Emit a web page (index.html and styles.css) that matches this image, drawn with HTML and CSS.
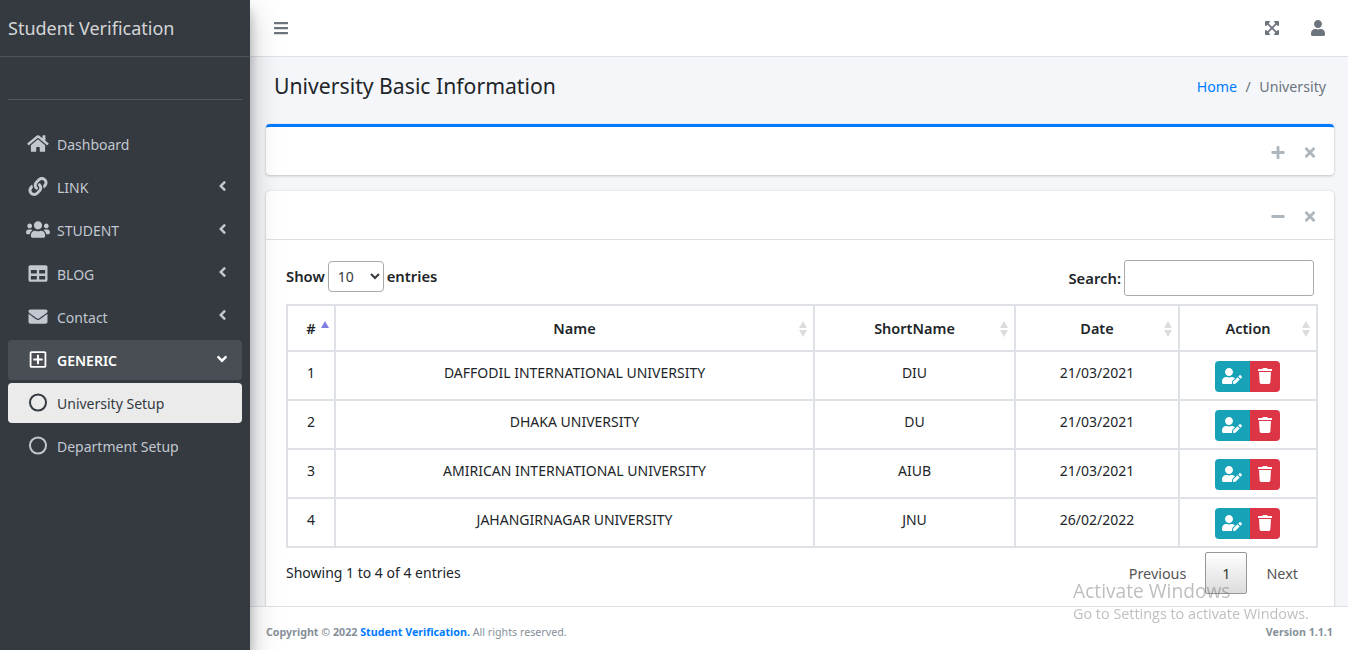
FILE: index.html
```html
<!DOCTYPE html>
<html lang="en">
<head>
    <meta charset="UTF-8">
    <meta name="viewport" content="width=device-width, initial-scale=1.0">
    <title>University Basic Information</title>
    <link rel="stylesheet" href="styles.css">
</head>
<body>

<!-- icon sprite -->
<svg class="sprite" xmlns="http://www.w3.org/2000/svg">
    <symbol id="i-bars" viewBox="0 0 448 512"><path d="M16 132h416c8.837 0 16-7.163 16-16V76c0-8.837-7.163-16-16-16H16C7.163 60 0 67.163 0 76v40c0 8.837 7.163 16 16 16zm0 160h416c8.837 0 16-7.163 16-16v-40c0-8.837-7.163-16-16-16H16c-8.837 0-16 7.163-16 16v40c0 8.837 7.163 16 16 16zm0 160h416c8.837 0 16-7.163 16-16v-40c0-8.837-7.163-16-16-16H16c-8.837 0-16 7.163-16 16v40c0 8.837 7.163 16 16 16z"/></symbol>
    <symbol id="i-user" viewBox="0 0 448 512"><path d="M224 256c70.7 0 128-57.3 128-128S294.7 0 224 0 96 57.3 96 128s57.3 128 128 128zm89.6 32h-16.7c-22.2 10.2-46.9 16-72.9 16s-50.6-5.8-72.9-16h-16.7C60.2 288 0 348.2 0 422.4V464c0 26.5 21.5 48 48 48h352c26.5 0 48-21.5 48-48v-41.6c0-74.2-60.2-134.4-134.4-134.4z"/></symbol>
    <symbol id="i-expand" viewBox="0 0 448 512"><path d="M448 344v112a23.94 23.94 0 0 1-24 24H312c-21.39 0-32.09-25.9-17-41l36.2-36.2L224 295.6 116.77 402.9 153 439c15.09 15.1 4.39 41-17 41H24a23.94 23.94 0 0 1-24-24V344c0-21.4 25.89-32.1 41-17l36.19 36.2L184.46 256 77.18 148.7 41 185c-15.1 15.1-41 4.4-41-17V56a23.94 23.94 0 0 1 24-24h112c21.39 0 32.09 25.9 17 41l-36.2 36.2L224 216.4l107.23-107.3L295 73c-15.09-15.1-4.39-41 17-41h112a23.94 23.94 0 0 1 24 24v112c0 21.4-25.89 32.1-41 17l-36.19-36.2L263.54 256l107.28 107.3L407 327.1c15.1-15.2 41-4.5 41 16.9z"/></symbol>
    <symbol id="i-home" viewBox="0 0 576 512"><path d="M280.37 148.26L96 300.11V464a16 16 0 0 0 16 16l112.06-.29a16 16 0 0 0 15.92-16V368a16 16 0 0 1 16-16h64a16 16 0 0 1 16 16v95.64a16 16 0 0 0 16 16.05L464 480a16 16 0 0 0 16-16V300L295.67 148.26a12.19 12.19 0 0 0-15.3 0zM571.6 251.47L488 182.56V44.05a12 12 0 0 0-12-12h-56a12 12 0 0 0-12 12v72.61L318.47 43a48 48 0 0 0-61 0L4.34 251.47a12 12 0 0 0-1.6 16.9l25.5 31A12 12 0 0 0 45.15 301l235.22-193.74a12.19 12.19 0 0 1 15.3 0L530.9 301a12 12 0 0 0 16.9-1.6l25.5-31a12 12 0 0 0-1.7-16.93z"/></symbol>
    <symbol id="i-link" viewBox="0 0 512 512"><path d="M326.612 185.391c59.747 59.809 58.927 155.698.36 214.59-.11.12-.24.25-.36.37l-67.2 67.2c-59.27 59.27-155.699 59.262-214.96 0-59.27-59.26-59.27-155.7 0-214.96l37.106-37.106c9.84-9.84 26.786-3.3 27.294 10.606.648 17.722 3.826 35.527 9.69 52.721 1.986 5.822.567 12.262-3.783 16.612l-13.087 13.087c-28.026 28.026-28.905 73.66-1.155 101.96 28.024 28.579 74.086 28.749 102.325.51l67.2-67.19c28.191-28.191 28.073-73.757 0-101.83-3.701-3.694-7.429-6.564-10.341-8.569a16.037 16.037 0 0 1-6.947-12.606c-.396-10.567 3.348-21.456 11.698-29.806l21.054-21.055c5.521-5.521 14.182-6.199 20.584-1.731a152.482 152.482 0 0 1 20.522 17.197zM467.547 44.449c-59.261-59.262-155.69-59.27-214.96 0l-67.2 67.2c-.12.12-.25.25-.36.37-58.566 58.892-59.387 154.781.36 214.59a152.454 152.454 0 0 0 20.521 17.196c6.402 4.468 15.064 3.789 20.584-1.731l21.054-21.055c8.35-8.35 12.094-19.239 11.698-29.806a16.037 16.037 0 0 0-6.947-12.606c-2.912-2.005-6.64-4.875-10.341-8.569-28.073-28.073-28.191-73.639 0-101.83l67.2-67.19c28.239-28.239 74.3-28.069 102.325.51 27.75 28.3 26.872 73.934-1.155 101.96l-13.087 13.087c-4.35 4.35-5.769 10.79-3.783 16.612 5.864 17.194 9.042 34.999 9.69 52.721.509 13.906 17.454 20.446 27.294 10.606l37.106-37.106c59.271-59.259 59.271-155.699.001-214.959z"/></symbol>
    <symbol id="i-users" viewBox="0 0 640 512"><path d="M96 224c35.3 0 64-28.7 64-64s-28.7-64-64-64-64 28.7-64 64 28.7 64 64 64zm448 0c35.3 0 64-28.7 64-64s-28.7-64-64-64-64 28.7-64 64 28.7 64 64 64zm32 32h-64c-17.6 0-33.5 7.1-45.1 18.6 40.3 22.1 68.9 62 75.1 109.4h66c17.7 0 32-14.3 32-32v-32c0-35.3-28.7-64-64-64zm-256 0c61.9 0 112-50.1 112-112S381.9 32 320 32 208 82.1 208 144s50.1 112 112 112zm76.8 32h-8.3c-20.8 10-43.9 16-68.5 16s-47.6-6-68.5-16h-8.3C179.6 288 128 339.6 128 403.2V432c0 26.5 21.5 48 48 48h288c26.5 0 48-21.5 48-48v-28.8c0-63.6-51.6-115.2-115.2-115.2zm-223.7-13.4C161.5 263.1 145.6 256 128 256H64c-35.3 0-64 28.7-64 64v32c0 17.7 14.3 32 32 32h65.9c6.3-47.4 34.9-87.3 75.2-109.4z"/></symbol>
    <symbol id="i-table" viewBox="0 0 512 512"><path d="M464 32H48C21.49 32 0 53.49 0 80v352c0 26.51 21.49 48 48 48h416c26.51 0 48-21.49 48-48V80c0-26.51-21.49-48-48-48zM224 416H64v-96h160v96zm0-160H64v-96h160v96zm224 160H288v-96h160v96zm0-160H288v-96h160v96z"/></symbol>
    <symbol id="i-envelope" viewBox="0 0 512 512"><path d="M502.3 190.8c3.9-3.1 9.7-.2 9.7 4.7V400c0 26.5-21.5 48-48 48H48c-26.5 0-48-21.5-48-48V195.6c0-5 5.7-7.8 9.7-4.7 22.4 17.4 52.1 39.5 154.1 113.6 21.1 15.4 56.7 47.8 92.2 47.6 35.7.3 72-32.8 92.3-47.6 102-74.1 131.6-96.3 154-113.7zM256 320c23.2.4 56.6-29.2 73.4-41.4 132.7-96.3 142.8-104.7 173.4-128.7 5.8-4.5 9.2-11.5 9.2-18.9v-19c0-26.5-21.5-48-48-48H48C21.5 64 0 85.5 0 112v19c0 7.4 3.4 14.3 9.2 18.9 30.6 23.9 40.7 32.4 173.4 128.7 16.8 12.2 50.2 41.8 73.4 41.4z"/></symbol>
    <symbol id="i-plus-square" viewBox="0 0 448 512"><path d="M352 240v32c0 6.6-5.4 12-12 12h-88v88c0 6.6-5.4 12-12 12h-32c-6.6 0-12-5.4-12-12v-88h-88c-6.6 0-12-5.4-12-12v-32c0-6.6 5.4-12 12-12h88v-88c0-6.6 5.4-12 12-12h32c6.6 0 12 5.4 12 12v88h88c6.6 0 12 5.4 12 12zm96-160v352c0 26.5-21.5 48-48 48H48c-26.5 0-48-21.5-48-48V80c0-26.5 21.5-48 48-48h352c26.5 0 48 21.5 48 48zm-48 346V86c0-3.3-2.7-6-6-6H54c-3.3 0-6 2.7-6 6v340c0 3.3 2.7 6 6 6h340c3.3 0 6-2.7 6-6z"/></symbol>
    <symbol id="i-angle-left" viewBox="0 0 256 512"><path d="M31.7 239l136-136c9.4-9.4 24.6-9.4 33.9 0l22.6 22.6c9.4 9.4 9.4 24.6 0 33.9L127.9 256l96.4 96.4c9.4 9.4 9.4 24.6 0 33.9L201.7 409c-9.4 9.4-24.6 9.4-33.9 0l-136-136c-9.5-9.4-9.5-24.6-.1-34z"/></symbol>
    <symbol id="i-angle-down" viewBox="0 0 320 512"><path d="M143 352.3L7 216.3c-9.4-9.4-9.4-24.6 0-33.9l22.6-22.6c9.4-9.4 24.6-9.4 33.9 0l96.4 96.4 96.4-96.4c9.4-9.4 24.6-9.4 33.9 0l22.6 22.6c9.4 9.4 9.4 24.6 0 33.9l-136 136c-9.2 9.4-24.4 9.4-33.8 0z"/></symbol>
    <symbol id="i-plus" viewBox="0 0 448 512"><path d="M416 208H272V64c0-17.67-14.33-32-32-32h-32c-17.67 0-32 14.33-32 32v144H32c-17.67 0-32 14.33-32 32v32c0 17.67 14.33 32 32 32h144v144c0 17.67 14.33 32 32 32h32c17.67 0 32-14.33 32-32V304h144c17.67 0 32-14.33 32-32v-32c0-17.67-14.33-32-32-32z"/></symbol>
    <symbol id="i-minus" viewBox="0 0 448 512"><path d="M416 208H32c-17.67 0-32 14.33-32 32v32c0 17.67 14.33 32 32 32h384c17.67 0 32-14.33 32-32v-32c0-17.67-14.33-32-32-32z"/></symbol>
    <symbol id="i-times" viewBox="0 0 352 512"><path d="M242.72 256l100.07-100.07c12.28-12.28 12.28-32.19 0-44.48l-22.24-22.24c-12.28-12.28-32.19-12.28-44.48 0L176 189.28 75.93 89.21c-12.28-12.28-32.19-12.28-44.48 0L9.21 111.45c-12.28 12.28-12.28 32.19 0 44.48L109.28 256 9.21 356.07c-12.28 12.28-12.28 32.19 0 44.48l22.24 22.24c12.28 12.28 32.2 12.28 44.48 0L176 322.72l100.07 100.07c12.28 12.28 32.2 12.28 44.48 0l22.24-22.24c12.28-12.28 12.28-32.19 0-44.48L242.72 256z"/></symbol>
    <symbol id="i-trash" viewBox="0 0 448 512"><path d="M432 32H312l-9.4-18.7A24 24 0 0 0 281.1 0H166.8a23.72 23.72 0 0 0-21.4 13.3L136 32H16A16 16 0 0 0 0 48v32a16 16 0 0 0 16 16h416a16 16 0 0 0 16-16V48a16 16 0 0 0-16-16zM53.2 467a48 48 0 0 0 47.9 45h245.8a48 48 0 0 0 47.9-45L416 128H32z"/></symbol>
    <symbol id="i-user-edit" viewBox="0 0 640 512"><path d="M224 256c70.7 0 128-57.3 128-128S294.7 0 224 0 96 57.3 96 128s57.3 128 128 128zm89.6 32h-16.7c-22.2 10.2-46.9 16-72.9 16s-50.6-5.8-72.9-16h-16.7C60.2 288 0 348.2 0 422.4V464c0 26.5 21.5 48 48 48h274.9c-2.4-6.8-3.4-14-2.6-21.3l6.8-60.9 1.2-11.1 7.9-7.9 77.3-77.3c-24.5-27.7-60-45.5-99.9-45.5zm45.3 145.3l-6.8 61c-1.1 10.2 7.5 18.8 17.6 17.6l60.9-6.8 137.9-137.9-71.7-71.7-137.9 137.8zM633 268.9L595.1 231c-9.3-9.3-24.5-9.3-33.8 0l-37.8 37.8-4.1 4.1 71.8 71.7 41.8-41.8c9.3-9.4 9.3-24.5 0-33.9z"/></symbol>
    <symbol id="i-circle" viewBox="0 0 18 18"><circle cx="9" cy="9" r="7.6" fill="none" stroke="currentColor" stroke-width="1.9"/></symbol>
</svg>

<div class="wrapper">
    <aside class="sidebar">
        <div class="brand">Student Verification</div>
        <div class="user-panel"></div>
        <nav class="side-nav">
            <a class="nav-item"><svg class="nav-icon"><use href="#i-home"/></svg><span class="nav-text">Dashboard</span></a>
            <a class="nav-item"><svg class="nav-icon"><use href="#i-link"/></svg><span class="nav-text">LINK</span><svg class="nav-arrow"><use href="#i-angle-left"/></svg></a>
            <a class="nav-item"><svg class="nav-icon"><use href="#i-users"/></svg><span class="nav-text">STUDENT</span><svg class="nav-arrow"><use href="#i-angle-left"/></svg></a>
            <a class="nav-item"><svg class="nav-icon"><use href="#i-table"/></svg><span class="nav-text">BLOG</span><svg class="nav-arrow"><use href="#i-angle-left"/></svg></a>
            <a class="nav-item"><svg class="nav-icon"><use href="#i-envelope"/></svg><span class="nav-text">Contact</span><svg class="nav-arrow"><use href="#i-angle-left"/></svg></a>
            <a class="nav-item open"><svg class="nav-icon"><use href="#i-plus-square"/></svg><span class="nav-text">GENERIC</span><svg class="nav-arrow"><use href="#i-angle-down"/></svg></a>
            <a class="nav-item current"><svg class="nav-icon"><use href="#i-circle"/></svg><span class="nav-text">University Setup</span></a>
            <a class="nav-item"><svg class="nav-icon"><use href="#i-circle"/></svg><span class="nav-text">Department Setup</span></a>
        </nav>
    </aside>

    <div class="main">
        <header class="topbar">
            <svg class="top-icon bars"><use href="#i-bars"/></svg>
            <div class="top-right">
                <svg class="top-icon"><use href="#i-expand"/></svg>
                <svg class="top-icon"><use href="#i-user"/></svg>
            </div>
        </header>

        <main class="content">
            <div class="page-head">
                <h1>University Basic Information</h1>
                <div class="breadcrumb"><a>Home</a><span class="slash">/</span><span>University</span></div>
            </div>

            <section class="card card-primary">
                <div class="card-tools">
                    <svg class="tool"><use href="#i-plus"/></svg>
                    <svg class="tool"><use href="#i-times"/></svg>
                </div>
            </section>

            <section class="card">
                <div class="card-tools with-line">
                    <svg class="tool"><use href="#i-minus"/></svg>
                    <svg class="tool"><use href="#i-times"/></svg>
                </div>
                <div class="card-body">
                    <div class="table-controls">
                        <label class="show-entries">Show
                            <select><option>10</option><option>25</option><option>50</option></select>
                            entries</label>
                        <label class="search-box">Search: <input type="search"></label>
                    </div>

                    <table class="data-table">
                        <colgroup>
                            <col class="col-id"><col class="col-name"><col class="col-short"><col class="col-date"><col class="col-action">
                        </colgroup>
                        <thead>
                            <tr>
                                <th class="sorted">#</th>
                                <th>Name</th>
                                <th>ShortName</th>
                                <th>Date</th>
                                <th>Action</th>
                            </tr>
                        </thead>
                        <tbody>
                            <tr>
                                <td>1</td>
                                <td>DAFFODIL INTERNATIONAL UNIVERSITY</td>
                                <td>DIU</td>
                                <td>21/03/2021</td>
                                <td><div class="btn-pair"><a class="btn btn-edit"><svg><use href="#i-user-edit"/></svg></a><a class="btn btn-del"><svg><use href="#i-trash"/></svg></a></div></td>
                            </tr>
                            <tr>
                                <td>2</td>
                                <td>DHAKA UNIVERSITY</td>
                                <td>DU</td>
                                <td>21/03/2021</td>
                                <td><div class="btn-pair"><a class="btn btn-edit"><svg><use href="#i-user-edit"/></svg></a><a class="btn btn-del"><svg><use href="#i-trash"/></svg></a></div></td>
                            </tr>
                            <tr>
                                <td>3</td>
                                <td>AMIRICAN INTERNATIONAL UNIVERSITY</td>
                                <td>AIUB</td>
                                <td>21/03/2021</td>
                                <td><div class="btn-pair"><a class="btn btn-edit"><svg><use href="#i-user-edit"/></svg></a><a class="btn btn-del"><svg><use href="#i-trash"/></svg></a></div></td>
                            </tr>
                            <tr>
                                <td>4</td>
                                <td>JAHANGIRNAGAR UNIVERSITY</td>
                                <td>JNU</td>
                                <td>26/02/2022</td>
                                <td><div class="btn-pair"><a class="btn btn-edit"><svg><use href="#i-user-edit"/></svg></a><a class="btn btn-del"><svg><use href="#i-trash"/></svg></a></div></td>
                            </tr>
                        </tbody>
                    </table>

                    <div class="table-footer">
                        <div class="table-info">Showing 1 to 4 of 4 entries</div>
                        <div class="pager">
                            <a class="page-link">Previous</a>
                            <a class="page-num">1</a>
                            <a class="page-link">Next</a>
                        </div>
                    </div>
                </div>
            </section>
        </main>

        <footer class="page-footer">
            <div><b>Copyright © 2022 <a>Student Verification.</a></b> All rights reserved.</div>
            <div><b>Version 1.1.1</b></div>
        </footer>
    </div>
</div>

<div class="watermark">
    <div class="wm-title">Activate Windows</div>
    <div class="wm-sub">Go to Settings to activate Windows.</div>
</div>

</body>
</html>
```

FILE: styles.css
```css
* {
    box-sizing: border-box;
}
body {
    font-family: "Noto Sans", sans-serif;
    font-size: 14px;
    color: #212529;
    margin: 0;
    height: 100vh;
    overflow: hidden;
}
a {
    text-decoration: none;
}
.sprite {
    display: none;
}
svg {
    fill: currentColor;
}
.wrapper {
    display: flex;
    height: 100%;
}

/* sidebar */
.sidebar {
    width: 250px;
    flex: none;
    background-color: #343a40;
    box-shadow: 0 14px 28px rgba(0, 0, 0, 0.25), 0 10px 10px rgba(0, 0, 0, 0.22);
    z-index: 5;
}
.brand {
    height: 57px;
    padding-left: 8px;
    line-height: 56px;
    font-size: 18px;
    color: rgba(255, 255, 255, 0.8);
    border-bottom: 1px solid #4b545c;
}
.user-panel {
    height: 43px;
    margin: 0 8px;
    border-bottom: 1px solid #4f5962;
}
.side-nav {
    display: flex;
    flex-direction: column;
    gap: 3.2px;
    padding: 23.6px 8px 0;
}
.nav-item {
    display: flex;
    align-items: center;
    height: 40px;
    padding: 0 15px 0 18px;
    border-radius: 4px;
    color: #c2c7d0;
}
.nav-icon {
    width: 24px;
    height: 19px;
    margin-right: 7px;
    flex: none;
}
.nav-text {
    flex: 1;
    padding-top: 2px;
}
.nav-arrow {
    width: 9px;
    height: 16px;
    margin-top: -2px;
}
.nav-item.open {
    background-color: rgba(255, 255, 255, 0.1);
    color: #fff;
}
.nav-item.open .nav-text {
    font-weight: 600;
}
.nav-item.open .nav-arrow {
    width: 12px;
    margin-right: -1px;
}
.nav-item.current {
    background-color: rgba(255, 255, 255, 0.9);
    color: #343a40;
}

/* top bar */
.main {
    flex: 1;
    min-width: 0;
    display: flex;
    flex-direction: column;
}
.topbar {
    height: 57px;
    flex: none;
    display: flex;
    align-items: center;
    justify-content: space-between;
    padding: 0 22px 0 24px;
    background-color: #fff;
    border-bottom: 1px solid #dee2e6;
    color: #6c757d;
}
.top-icon {
    width: 16px;
    height: 16px;
    display: block;
}
.top-icon.bars {
    width: 14px;
}
.top-right {
    display: flex;
    gap: 30px;
}

/* content */
.content {
    flex: 1;
    min-height: 0;
    overflow: hidden;
    padding: 0 14px 0 16px;
    background-color: #f4f6f9;
}
.page-head {
    display: flex;
    align-items: center;
    justify-content: space-between;
    height: 59px;
    padding: 0 8px 2px;
}
.page-head h1 {
    margin: 0;
    font-size: 21.2px;
    font-weight: 400;
}
.breadcrumb {
    font-size: 14.2px;
    margin-top: 2px;
    color: #6c757d;
}
.breadcrumb a {
    color: #007bff;
}
.slash {
    padding: 0 8.5px;
}
.card {
    background-color: #fff;
    border-radius: 4px;
    box-shadow: 0 0 1px rgba(0, 0, 0, 0.125), 0 1px 3px rgba(0, 0, 0, 0.2);
    margin-bottom: 16px;
}
.card-primary {
    border-top: 3px solid #007bff;
    margin-top: 8px;
}
.card-tools {
    height: 48px;
    display: flex;
    align-items: center;
    justify-content: flex-end;
    gap: 18px;
    padding: 2px 17px 0;
    color: #adb5bd;
}
.card-tools.with-line {
    height: 49px;
    border-bottom: 1px solid rgba(0, 0, 0, 0.125);
}
.tool {
    width: 14px;
    height: 15px;
}
.card-body {
    padding: 20px;
}
.table-controls {
    display: flex;
    justify-content: space-between;
    align-items: flex-start;
    margin-bottom: 8px;
    font-size: 14.8px;
    font-weight: 600;
}
.show-entries {
    display: flex;
    align-items: center;
    gap: 3px;
    height: 31px;
    margin-top: 1px;
    padding-bottom: 1px;
}
.show-entries select {
    width: 56px;
    height: 31px;
    margin-top: 1px;
    padding-left: 5px;
    font-family: inherit;
    font-size: 14px;
    color: #343a40;
    background-color: #fff;
    border: 1px solid #aaa;
    border-radius: 4px;
}
.search-box {
    display: flex;
    align-items: center;
    gap: 3px;
}
.search-box input {
    width: 190px;
    height: 36px;
    background-color: #fff;
    border: 1px solid #aaa;
    border-radius: 3px;
}

/* table */
.data-table {
    width: calc(100% + 4px);
    table-layout: fixed;
    border-collapse: collapse;
    text-align: center;
}
.col-id {
    width: 48px;
}
.col-short {
    width: 201px;
}
.col-date {
    width: 164px;
}
.col-action {
    width: 138px;
}
.data-table th,
.data-table td {
    border: 2px solid #dee2e6;
    padding: 0;
}
.data-table th {
    position: relative;
    height: 46px;
    font-size: 14.5px;
    font-weight: 600;
}
.data-table td {
    height: 49px;
    padding-bottom: 7px;
}
.data-table th::before,
.data-table th::after {
    content: "";
    position: absolute;
    right: 6px;
    border-left: 4px solid transparent;
    border-right: 4px solid transparent;
}
.data-table th::before {
    top: 15px;
    border-bottom: 7px solid #dcdcdc;
}
.data-table th::after {
    top: 24px;
    border-top: 7px solid #dcdcdc;
}
.data-table th.sorted::before {
    right: 5px;
    border-bottom-color: #8080e0;
}
.data-table th.sorted::after {
    display: none;
}
.btn-pair {
    display: inline-flex;
    vertical-align: middle;
    margin: 8px 2px 0 0;
}
.btn {
    display: flex;
    align-items: center;
    justify-content: center;
    height: 31px;
    color: #fff;
}
.btn svg {
    height: 16px;
    width: 14px;
}
.btn-edit {
    width: 35px;
    background-color: #17a2b8;
    border-radius: 4px 0 0 4px;
}
.btn-edit svg {
    width: 20px;
}
.btn-del {
    width: 30px;
    background-color: #dc3545;
    border-radius: 0 4px 4px 0;
}
.table-footer {
    display: flex;
    justify-content: space-between;
    align-items: flex-start;
    padding-top: 4px;
}
.table-info {
    padding-top: 11px;
}
.pager {
    display: flex;
    align-items: center;
    font-size: 14.4px;
    color: #555;
    margin-right: -3px;
}
.page-link {
    padding: 0 19px;
}
.page-num {
    width: 42px;
    height: 42px;
    line-height: 42px;
    text-align: center;
    color: #333;
    border: 1px solid #979797;
    border-radius: 2px;
    background: linear-gradient(to bottom, #fff 0%, #dcdcdc 100%);
}

/* footer */
.page-footer {
    height: 44px;
    flex: none;
    display: flex;
    align-items: center;
    justify-content: space-between;
    padding: 6px 15px 0 16px;
    background-color: #fff;
    border-top: 1px solid #dee2e6;
    font-size: 10.7px;
    color: #869099;
}
.page-footer a {
    color: #007bff;
}

/* windows activation notice, sits over the page */
.watermark {
    position: fixed;
    left: 1073px;
    top: 578px;
    font-family: "Open Sans", sans-serif;
    color: rgba(110, 110, 110, 0.45);
    pointer-events: none;
    z-index: 10;
}
.wm-title {
    font-size: 19.2px;
    line-height: 26px;
    white-space: nowrap;
}
.wm-sub {
    font-size: 14.4px;
    line-height: 20px;
    white-space: nowrap;
}
```
